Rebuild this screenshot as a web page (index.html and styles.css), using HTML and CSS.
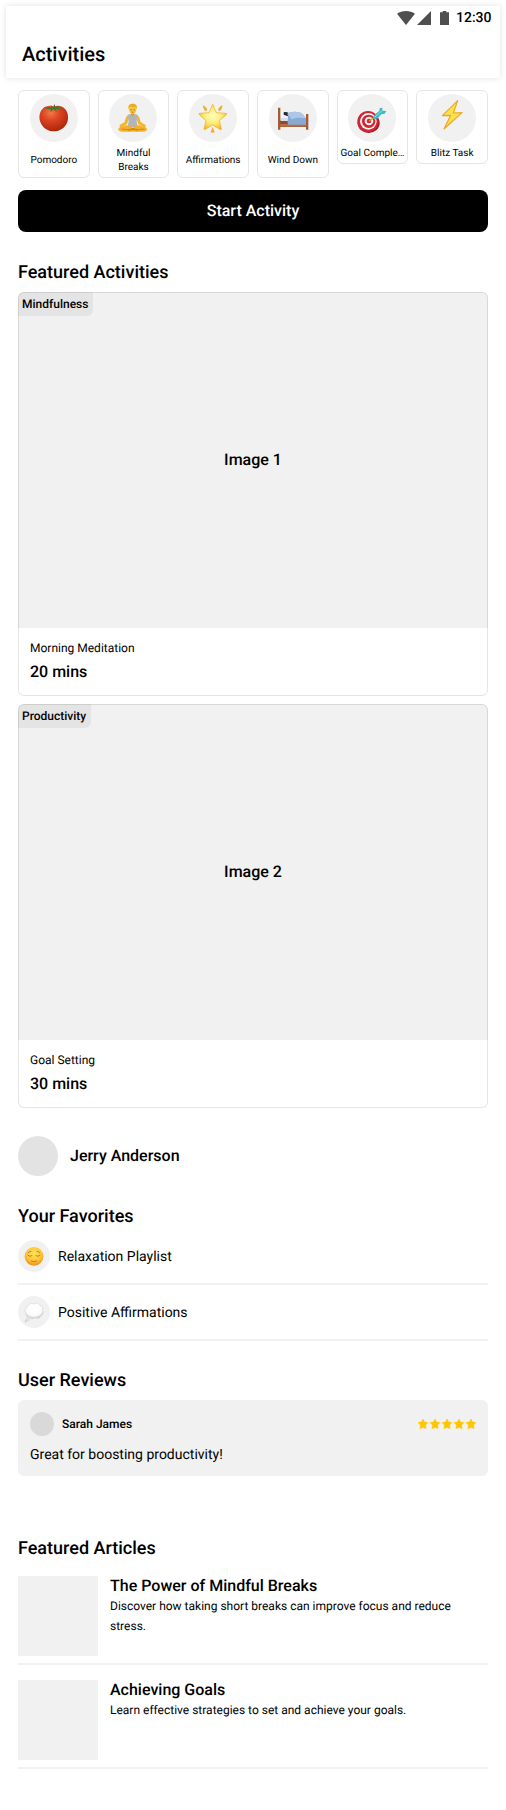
FILE: index.html
```html
<!DOCTYPE html>
<html lang="en">
<head>
<meta charset="utf-8">
<title>Activities</title>
<link rel="stylesheet" href="styles.css">
</head>
<body>
<header class="topbar">
  <div class="status">
    <svg class="status-wifi" viewBox="0 0 18 14"><path d="M9 14 0 2.8C2.600 1 5.600 0 9 0s6.400 1 9 2.800z"/></svg>
    <svg class="status-signal" viewBox="0 0 14 14"><path d="M0 14 14 0v14z"/></svg>
    <svg class="status-battery" viewBox="0 0 9 14"><path d="M0 1.200h2.700V0h3.600v1.200H9V14H0z"/></svg>
    <span class="clock">12:30</span>
  </div>
  <h1 class="title">Activities</h1>
</header>
<main class="content">
  <section class="shortcuts">
    <div class="shortcut">
      <svg class="shortcut-icon" viewBox="0 0 144 144">
        <defs>
          <radialGradient id="tomato" cx=".4" cy=".28" r=".75"><stop offset="0" stop-color="#f07a4c"/><stop offset=".4" stop-color="#dc4523"/><stop offset="1" stop-color="#a82408"/></radialGradient>
        </defs>
        <path d="M72 38c-10-5-25-3-34 6-10 10-12 26-7 40 6 17 22 28 40 28 19 0 35-11 41-28 5-13 2-29-7-39-9-10-23-12-33-7z" fill="url(#tomato)"/>
        <path d="M43 41c9-3 16-3 22 0l-3-8 7 6 5-9 2 9 15-3-9 6c6 0 11 2 15 5-8-1-14-2-19-2l3 9-11-8-9 9 1-9c-6 0-12-1-19-5z" fill="#3f7a2b"/>
      </svg>
      <span class="shortcut-label">Pomodoro</span>
    </div>
    <div class="shortcut">
      <svg class="shortcut-icon" viewBox="0 0 144 144">
        <path d="M57 63c-6 3-8 13-10 21L31 94l3 6 20-9 6-18zM85 63c6 3 8 13 10 21l16 10-3 6-20-9-6-18z" fill="#f3b62c"/>
        <path d="M66 55h10v12H66z" fill="#dc9a1c"/>
        <path d="M56 63c4-2 7-3 9-3 2 6 10 6 12 0 3 0 6 1 9 3l-3 18 3 18H56l3-18z" fill="#b2b4ba"/>
        <path d="M52 94c-12 1-23 6-24 12 0 5 5 7 12 7h62c7 0 12-2 12-7-1-6-12-11-24-12-9 1-14 4-19 7-5-3-10-6-19-7z" fill="#f4b12a"/>
        <path d="M38 105c14 2 24 3 34-2 10 5 20 4 34 2M58 111c5-6 23-6 28 0" fill="none" stroke="#b97a10" stroke-width="2"/>
        <ellipse cx="71" cy="46" rx="11" ry="14" fill="#f8c43d"/>
        <path d="M59 46c-3-12 3-17 12-17s15 5 12 17l-3-8c-8 2-13 1-17-1z" fill="#edaa1e"/>
        <path d="M64 47q3 2 5 0M73 47q3 2 5 0M68 54q3 2 6 0" fill="none" stroke="#8b540e" stroke-width="1.800"/>
      </svg>
      <span class="shortcut-label">Mindful Breaks</span>
    </div>
    <div class="shortcut">
      <svg class="shortcut-icon" viewBox="0 0 144 144">
        <defs>
          <radialGradient id="star" cx=".5" cy=".45" r=".6"><stop offset="0" stop-color="#fffdc5"/><stop offset=".5" stop-color="#fdee75"/><stop offset="1" stop-color="#f3af25"/></radialGradient>
        </defs>
        <path d="M71 31 82 56l29 2c2 0 3 2 1 4L91 80l6 24c0 3-2 4-4 2L71 93l-22 13c-2 2-4 1-4-2l6-24-20-18c-2-2-1-4 1-4l28-2z" fill="url(#star)" stroke="#efaa27" stroke-width="2" stroke-linejoin="round"/>
        <path d="M42 34c6 2 11 7 13 13l-5 5c-6-5-9-12-8-18zM100 34c-6 2-11 7-13 13l5 5c6-5 9-12 8-18zM71 98l6 17c-4 2-8 2-12 0z" fill="#efb02d"/>
      </svg>
      <span class="shortcut-label">Affirmations</span>
    </div>
    <div class="shortcut">
      <svg class="shortcut-icon" viewBox="0 0 144 144">
        <path d="M32 78h80v21H32z" fill="#8c4a2a"/>
        <path d="M32 90h80v8H32z" fill="#b66d40"/>
        <path d="M34 66h50v15H34z" fill="#d6dfeb"/>
        <path d="M34 62c0-7 4-10 11-9l16 3v15H34z" fill="#f5f7fa"/>
        <path d="M44 55c7-3 15 0 17 5l-5 7-12-5z" fill="#252b3a"/>
        <path d="M55 60c8-9 36-9 46 0l11 14v18H58c-6-9 3-20-3-32z" fill="#88a9d4"/>
        <path d="M55 60c8-9 36-9 46 0l9 13c-14-3-32-3-44 3-1-8-5-12-11-16z" fill="#aec7e7"/>
        <path d="M27 41h7v66h-7zM111 60h7v47h-7z" fill="#a15b36"/>
      </svg>
      <span class="shortcut-label">Wind Down</span>
    </div>
    <div class="shortcut">
      <svg class="shortcut-icon" viewBox="0 0 144 144">
        <ellipse cx="62" cy="87" rx="33" ry="30" fill="#96131d"/>
        <circle cx="60" cy="83" r="32" fill="#d32331"/>
        <circle cx="61" cy="82" r="25" fill="#f7f2f1"/>
        <circle cx="62" cy="82" r="20" fill="#d32331"/>
        <circle cx="63" cy="81" r="13" fill="#f7f2f1"/>
        <circle cx="63" cy="81" r="7" fill="#d32331"/>
        <path d="m63 82 17-14" stroke="#d69b24" stroke-width="4"/>
        <path d="m76 70 6-10 12-9 1-8 8-2v9l12 1-5 8-10 2-10 11-11 5z" fill="#3fb9c2"/>
        <path d="m79 70 24-20" stroke="#83e1df" stroke-width="3"/>
      </svg>
      <span class="shortcut-label one-line">Goal Comple…</span>
    </div>
    <div class="shortcut">
      <svg class="shortcut-icon" viewBox="0 0 144 144">
        <path d="M89 20 43 65l25-1-20 41 54-49-26 1z" fill="#fae34c" stroke="#f3a51f" stroke-width="3.500" stroke-linejoin="round"/>
      </svg>
      <span class="shortcut-label one-line">Blitz Task</span>
    </div>
  </section>

  <button class="start">Start Activity</button>

  <h2 class="heading">Featured Activities</h2>
  <div class="features">
    <article class="feature">
      <div class="feature-image"><span class="tag">Mindfulness</span>Image 1</div>
      <div class="feature-body"><span class="feature-name">Morning Meditation</span><strong class="feature-time">20 mins</strong></div>
    </article>
    <article class="feature">
      <div class="feature-image"><span class="tag">Productivity</span>Image 2</div>
      <div class="feature-body"><span class="feature-name">Goal Setting</span><strong class="feature-time">30 mins</strong></div>
    </article>
  </div>

  <div class="profile"><span class="avatar"></span><strong class="profile-name">Jerry Anderson</strong></div>

  <h2 class="heading">Your Favorites</h2>
  <ul class="favorites">
    <li class="favorite">
      <svg class="favorite-icon" viewBox="0 0 96 96">
        <defs><radialGradient id="face" cx=".5" cy=".35" r=".65"><stop offset="0" stop-color="#ffe35c"/><stop offset=".65" stop-color="#fcc234"/><stop offset="1" stop-color="#ed8b1a"/></radialGradient></defs>
        <circle cx="48" cy="49" r="28" fill="url(#face)"/>
        <path d="M30 46q5 6 12 1M54 47q7 5 12-1M40 63q8 5 16 0M31 38q4-4 8-4M57 34q4 0 8 4" fill="none" stroke="#94601a" stroke-width="2" stroke-linecap="round"/>
      </svg>
      <span class="favorite-name">Relaxation Playlist</span>
    </li>
    <li class="favorite">
      <svg class="favorite-icon" viewBox="0 0 96 96">
        <defs><radialGradient id="cloud" cx=".48" cy=".35" r=".65"><stop offset="0" stop-color="#fff"/><stop offset=".7" stop-color="#fbfbfb"/><stop offset="1" stop-color="#c9c9c9"/></radialGradient></defs>
        <path d="M31 29c2-7 11-9 16-5 6-5 17-3 19 4 7 1 10 8 7 13 5 7 3 16-4 18-2 7-11 10-17 6-6 5-15 4-18-2-7 1-12-5-10-12-5-5-3-15 3-16-1-2 1-6 4-6z" fill="url(#cloud)" stroke="#cfcfcf" stroke-width="1.500"/>
        <circle cx="29" cy="70" r="4" fill="#eee" stroke="#b9b9b9" stroke-width="1.500"/>
        <circle cx="23" cy="76" r="2" fill="#eee" stroke="#b9b9b9" stroke-width="1.500"/>
      </svg>
      <span class="favorite-name">Positive Affirmations</span>
    </li>
  </ul>

  <h2 class="heading">User Reviews</h2>
  <div class="review">
    <div class="review-head">
      <span class="review-avatar"></span>
      <strong class="review-name">Sarah James</strong>
      <svg class="stars" viewBox="0 0 58 10">
        <defs><path id="s" d="M5 .2 6.500 3.100l3.300.5-2.300 2.400.5 3.600L5 8.300 2 9.600l.5-3.600L.2 3.600l3.300-.5z" stroke="#ffc500" stroke-width=".7" stroke-linejoin="round"/></defs>
        <use href="#s"/><use href="#s" x="12"/><use href="#s" x="24"/><use href="#s" x="36"/><use href="#s" x="48"/>
      </svg>
    </div>
    <p class="review-text">Great for boosting productivity!</p>
  </div>

  <h2 class="heading articles-heading">Featured Articles</h2>
  <div class="articles">
    <article class="article">
      <div class="thumb"></div>
      <div class="article-text"><h3 class="article-title">The Power of Mindful Breaks</h3><p class="article-desc">Discover how taking short breaks can improve focus and reduce stress.</p></div>
    </article>
    <article class="article">
      <div class="thumb"></div>
      <div class="article-text"><h3 class="article-title">Achieving Goals</h3><p class="article-desc">Learn effective strategies to set and achieve your goals.</p></div>
    </article>
  </div>
</main>
</body>
</html>
```
FILE: styles.css
```css
* { box-sizing: border-box; }
body { margin: 0; background: #fff; color: #000; font-family: Roboto, "Liberation Sans", sans-serif; text-rendering: geometricPrecision; }
h1, h2, h3, p, ul { margin: 0; padding: 0; }
h1, h2, h3, strong { font-weight: 500; }
svg { display: block; flex: none; }

.topbar { margin: 6px 6px 0; height: 72px; box-shadow: 0 0 6px rgba(0, 0, 0, .12); }
.status { display: flex; justify-content: flex-end; align-items: center; height: 24px; padding-right: 8px; fill: #4f4f4f; }
.status-wifi { width: 18px; height: 14px; margin-right: 2px; }
.status-signal { width: 14px; height: 14px; margin-right: 9px; }
.status-battery { width: 9px; height: 14px; margin-right: 7px; }
.clock { width: 36px; font-size: 14px; font-weight: 500; line-height: 26px; white-space: nowrap; }
.title { padding: 10px 16px 0; font-size: 20px; line-height: 28px; }

.content { padding: 12px 18px 0; }
.shortcuts { display: grid; grid-template-columns: repeat(6, minmax(0, 1fr)); gap: 8px; align-items: start; }
.shortcut { display: flex; flex-direction: column; align-items: center; padding: 3px 3px 2px; border: 1px solid #e5e5e5; border-radius: 6px; }
.shortcut-icon { width: 48px; height: 48px; border-radius: 50%; background: #f1f1f1; }
.shortcut-label { display: flex; align-items: center; justify-content: center; height: 28px; margin-top: 5px; font-size: 10px; line-height: 14px; text-align: center; }
.one-line { height: 14px; white-space: nowrap; }

.start { display: block; width: 100%; height: 42px; margin: 12px 0 0; padding: 0; border: 0; border-radius: 8px; background: #000; color: #fff; font: 500 16px/42px Roboto, "Liberation Sans", sans-serif; text-rendering: geometricPrecision; }
.heading { margin-top: 29px; font-size: 18px; line-height: 24px; }

.features { display: grid; gap: 8px; margin-top: 7px; }
.feature { border-radius: 6px; box-shadow: inset 0 0 0 1px rgba(0, 0, 0, .1); overflow: hidden; }
.feature-image { position: relative; display: flex; align-items: center; justify-content: center; height: 336px; background: rgba(0, 0, 0, .055); font-size: 16px; font-weight: 500; line-height: 20px; }
.tag { position: absolute; left: 0; top: 0; padding: 0 5px 0 4px; border-bottom-right-radius: 6px; background: rgba(0, 0, 0, .05); font-size: 12px; line-height: 24px; }
.feature-body { display: flex; flex-direction: column; gap: 4px; padding: 12px; }
.feature-name { font-size: 12px; line-height: 16px; }
.feature-time { font-size: 16px; line-height: 24px; }

.profile { display: flex; align-items: center; gap: 12px; margin-top: 28px; }
.avatar { width: 40px; height: 40px; border-radius: 50%; background: #e3e3e3; }
.profile-name { padding-bottom: 1px; font-size: 16px; line-height: 20px; }

.favorites { margin-top: 11px; list-style: none; display: grid; gap: 11px; }
.favorite { display: flex; align-items: center; gap: 8px; height: 45px; padding-bottom: 11px; border-bottom: 2px solid #f1f1f1; font-size: 14px; }
.favorite-icon { width: 32px; height: 32px; border-radius: 50%; background: #f1f1f1; }
.favorite-name { padding-top: 2px; line-height: 16px; }
.favorites + .heading { margin-top: 28px; }

.review { margin-top: 7px; padding: 12px 12px 11px; border-radius: 6px; background: #f1f1f1; }
.review-head { display: flex; align-items: center; gap: 8px; }
.review-avatar { width: 24px; height: 24px; border-radius: 50%; background: #d9d9d9; }
.review-name { font-size: 12px; }
.stars { width: 58px; height: 10px; margin-left: auto; fill: #ffc500; }
.review-text { margin-top: 9px; font-size: 14px; line-height: 20px; }

.articles-heading { margin-top: 61px; }
.articles { display: grid; gap: 15px; margin-top: 15px; }
.article { display: flex; gap: 12px; padding-bottom: 7px; border-bottom: 2px solid #f1f1f1; }
.thumb { flex: none; width: 80px; height: 80px; background: #f1f1f1; }
.article-title { font-size: 16px; line-height: 20px; }
.article-desc { font-size: 12px; line-height: 20px; }
```
